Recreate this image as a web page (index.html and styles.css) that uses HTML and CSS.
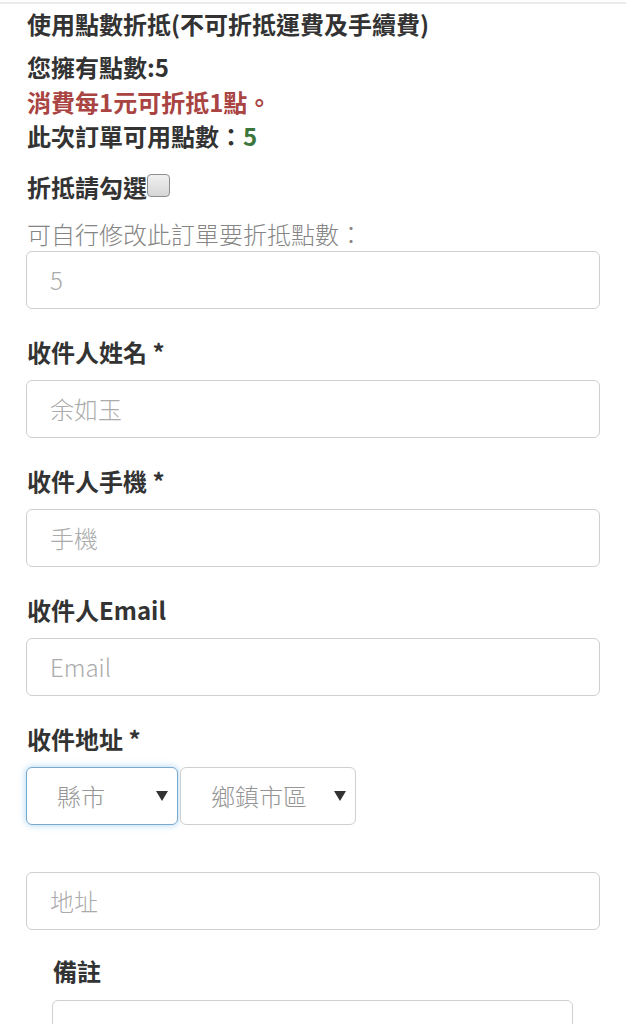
FILE: index.html
```html
<!DOCTYPE html>
<html lang="zh-Hant">
<head>
<meta charset="utf-8">
<title>結帳</title>
<link rel="stylesheet" href="styles.css">
</head>
<body>
<div class="topline"></div>
<div class="container">
  <div class="points">
    <div class="title">使用點數折抵(不可折抵運費及手續費)</div>
    <div class="line">您擁有點數:5</div>
    <div class="line red">消費每1元可折抵1點。</div>
    <div class="line">此次訂單可用點數：<span class="green">5</span></div>
    <div class="check-row">折抵請勾選<span class="checkbox"></span></div>
    <div class="hint">可自行修改此訂單要折抵點數：</div>
    <input class="field" type="text" placeholder="5">
  </div>

  <div class="group">
    <label class="label">收件人姓名 *</label>
    <input class="field" type="text" placeholder="余如玉">
  </div>
  <div class="group">
    <label class="label">收件人手機 *</label>
    <input class="field" type="text" placeholder="手機">
  </div>
  <div class="group">
    <label class="label">收件人Email</label>
    <input class="field" type="text" placeholder="Email">
  </div>
  <div class="group addr">
    <label class="label">收件地址 *</label>
    <div class="selects">
      <div class="sel sel-city focus">
        <span class="sel-text">縣市</span>
        <svg class="arrow" viewBox="0 0 12 10" width="12" height="10"><path d="M0 0H12L6 10Z" fill="#333"/></svg>
      </div>
      <div class="sel sel-dist">
        <span class="sel-text">鄉鎮市區</span>
        <svg class="arrow" viewBox="0 0 12 10" width="12" height="10"><path d="M0 0H12L6 10Z" fill="#333"/></svg>
      </div>
    </div>
  </div>
  <div class="group addr-line">
    <input class="field" type="text" placeholder="地址">
  </div>
  <div class="group note">
    <label class="label">備註</label>
    <div class="textarea"></div>
  </div>
</div>
</body>
</html>
```

FILE: styles.css
```css
* { box-sizing: border-box; }
html, body {
  margin: 0;
  padding: 0;
  background: #fff;
  height: 1024px;
  overflow: hidden;
}
body {
  font-family: "Noto Sans CJK TC", "Noto Sans", sans-serif;
  color: #333;
  font-size: 24px;
}
.topline {
  height: 2px;
  margin-top: 2px;
  background: #ebebeb;
}
.container {
  padding: 3px 26px 0 26px;
}
.title {
  font-weight: 700;
  line-height: 34px;
  margin-bottom: 9px;
  padding-left: 1px;
}
.line {
  font-weight: 700;
  line-height: 34.5px;
  padding-left: 1px;
}
.red { color: #a94442; }
.green { color: #3c763d; }
.check-row {
  font-weight: 700;
  line-height: 34px;
  margin-top: 16px;
  display: flex;
  align-items: flex-start;
  padding-left: 1px;
}
.checkbox {
  display: inline-block;
  width: 23px;
  height: 23px;
  margin-top: 4px;
  border: 1px solid #8e8e8e;
  border-radius: 4px;
  background: linear-gradient(#f0f0f0, #d6d6d6);
}
.hint {
  font-weight: 300;
  color: #858585;
  line-height: 34px;
  margin-top: 13px;
  padding-left: 1px;
}
.field {
  display: block;
  width: 100%;
  height: 58px;
  margin: 0;
  padding: 0 23px;
  border: 1.5px solid #cfcfcf;
  border-radius: 6px;
  background: #fff;
  font-family: "Noto Sans CJK TC", "Noto Sans", sans-serif;
  font-size: 24px;
  font-weight: 300;
  color: #555;
  outline: none;
}
.field::placeholder {
  color: #ababab;
  font-weight: 300;
}
.group {
  margin-top: 26px;
}
.label {
  display: block;
  font-weight: 700;
  line-height: 34px;
  margin-bottom: 11px;
  padding-left: 1px;
}
.selects {
  display: flex;
  gap: 2px;
}
.sel {
  position: relative;
  height: 58px;
  border: 1.5px solid #cfcfcf;
  border-radius: 6px;
  background: #fff;
  display: flex;
  align-items: center;
  padding-left: 30px;
  font-weight: 300;
  color: #959595;
}
.sel-city { width: 152px; }
.sel-dist { width: 176px; }
.sel.focus {
  border-color: #78a9cf;
  box-shadow: 0 0 7px rgba(102, 175, 233, 0.55);
}
.arrow {
  position: absolute;
  right: 9px;
  top: 23px;
}
.addr-line {
  margin-top: 47px;
}
.note {
  margin-top: 24px;
  padding: 0 27px 0 26px;
}
.note .label {
  margin-bottom: 12px;
}
.textarea {
  height: 80px;
  border: 1.5px solid #cfcfcf;
  border-radius: 6px;
  background: #fff;
}
```
